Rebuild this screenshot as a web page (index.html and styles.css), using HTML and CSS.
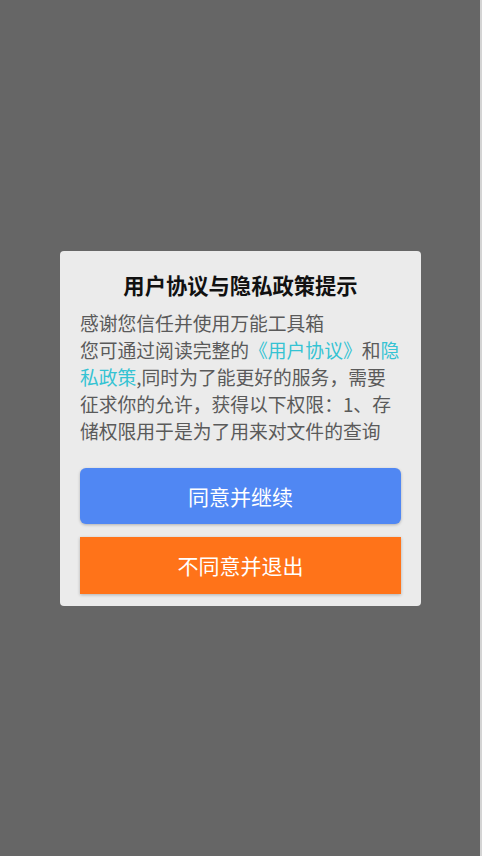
FILE: index.html
```html
<!DOCTYPE html>
<html lang="zh">
<head>
<meta charset="utf-8">
<title>用户协议与隐私政策提示</title>
<link rel="stylesheet" href="styles.css">
</head>
<body>
<div class="overlay">
  <div class="dialog">
    <h1 class="title">用户协议与隐私政策提示</h1>
    <p class="body">感谢您信任并使用万能工具箱<br>您可通过阅读完整的<span class="link">《用户协议》</span>和<span class="link">隐私政策</span>,同时为了能更好的服务，需要征求你的允许，获得以下权限：1、存储权限用于是为了用来对文件的查询</p>
    <div class="btn btn-agree">同意并继续</div>
    <div class="btn btn-exit">不同意并退出</div>
  </div>
</div>
</body>
</html>
```
FILE: styles.css
```css
html, body {
  margin: 0;
  padding: 0;
  height: 100%;
}
body {
  background: #666666;
  font-family: "Noto Sans CJK SC", "Noto Sans", sans-serif;
  border-right: 2px solid #d4d4d4;
  box-sizing: border-box;
}
.overlay {
  height: 100%;
  display: flex;
  align-items: center;
  justify-content: center;
  padding-left: 1px;
  box-sizing: border-box;
}
.dialog {
  width: 361px;
  box-sizing: border-box;
  background: #ebebeb;
  border-radius: 4px;
  padding: 18px 20px 12px 20px;
  display: flex;
  flex-direction: column;
}
.title {
  margin: 0;
  font-size: 21.3px;
  line-height: 32px;
  font-weight: bold;
  color: #111111;
  text-align: center;
}
.body {
  margin: 8px 0 0 0;
  font-size: 18.8px;
  line-height: 27px;
  color: #5a5a5a;
}
.link {
  color: #35c3d3;
}
.btn {
  display: flex;
  align-items: center;
  justify-content: center;
  color: #ffffff;
  font-size: 21px;
  box-shadow: 0 1px 3px rgba(0, 0, 0, 0.25);
}
.btn-agree {
  margin-top: 24px;
  height: 56px;
  background: #5087f3;
  border-radius: 6px;
}
.btn-exit {
  margin-top: 13px;
  height: 57px;
  background: #ff7319;
}
```
